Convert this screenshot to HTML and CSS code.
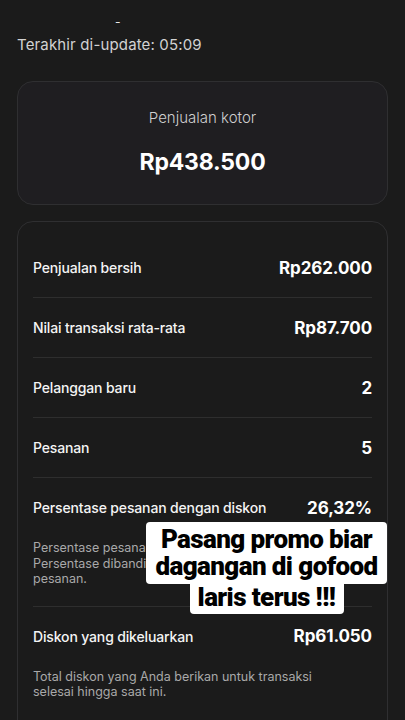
FILE: index.html
```html
<!DOCTYPE html>
<html lang="id">
<head>
<meta charset="utf-8">
<link rel="stylesheet" href="styles.css">
</head>
<body>
<div class="page">
  <div class="dash">-</div>
  <div class="updated">Terakhir di-update: 05:09</div>

  <section class="card gross">
    <div class="gross-label">Penjualan kotor</div>
    <div class="gross-value">Rp438.500</div>
  </section>

  <section class="card stats">
    <div class="row">
      <div class="row-head"><span class="label">Penjualan bersih</span><span class="value">Rp262.000</span></div>
    </div>
    <div class="row">
      <div class="row-head"><span class="label">Nilai transaksi rata-rata</span><span class="value">Rp87.700</span></div>
    </div>
    <div class="row">
      <div class="row-head"><span class="label">Pelanggan baru</span><span class="value">2</span></div>
    </div>
    <div class="row">
      <div class="row-head"><span class="label">Pesanan</span><span class="value">5</span></div>
    </div>
    <div class="row with-desc">
      <div class="row-head"><span class="label">Persentase pesanan dengan diskon</span><span class="value">26,32%</span></div>
      <p class="desc">Persentase pesanan yang memakai diskon.<br>Persentase dibandingkan dengan total<br>pesanan.</p>
    </div>
    <div class="row with-desc">
      <div class="row-head"><span class="label">Diskon yang dikeluarkan</span><span class="value">Rp61.050</span></div>
      <p class="desc">Total diskon yang Anda berikan untuk transaksi<br>selesai hingga saat ini.</p>
    </div>
  </section>

  <div class="caption">
    <span class="cap-box cap-wide">Pasang promo biar<br>dagangan di gofood</span>
    <span class="cap-box cap-narrow">laris terus !!!</span>
  </div>
</div>
</body>
</html>
```
FILE: styles.css
```css
* { box-sizing: border-box; }
html, body {
  margin: 0;
  padding: 0;
  background: #1b1b1b;
}
body {
  font-family: Inter, "Noto Sans", sans-serif;
  color: #f2f2f2;
  width: 405px;
  height: 720px;
  overflow: hidden;
}
.page {
  position: relative;
  padding: 17px 17px 0 17px;
  height: 720px;
  overflow: hidden;
}
.dash {
  color: #e8e8e8;
  font-size: 12px;
  line-height: 10px;
  height: 10px;
  padding-left: 98px;
}
.updated {
  font-size: 15px;
  color: #d2d2d2;
  line-height: 18px;
  margin-top: 9px;
  letter-spacing: 0.15px;
}
.card {
  border: 1px solid #2f2f31;
  border-radius: 16px;
}
.gross {
  margin-top: 27px;
  height: 124px;
  background: #1f1e21;
  display: flex;
  flex-direction: column;
  align-items: center;
  padding-top: 26px;
}
.gross-label {
  font-size: 15px;
  color: #cfcfcf;
  font-weight: 300;
  line-height: 20px;
}
.gross-value {
  font-size: 23px;
  font-weight: 700;
  color: #ffffff;
  margin-top: 20px;
  line-height: 28px;
  letter-spacing: -0.2px;
}
.stats {
  margin-top: 16px;
  padding: 16px 15px 40px 15px;
  background: #1b1b1b;
  height: 600px;
}
.row {
  border-bottom: 1px solid #2e2e2e;
}
.row:last-child { border-bottom: none; }
.row-head {
  height: 59px;
  display: flex;
  align-items: center;
  justify-content: space-between;
}
.label {
  font-size: 14px;
  font-weight: 500;
  color: #f4f4f4;
  letter-spacing: -0.15px;
}
.value {
  font-size: 17px;
  font-weight: 700;
  color: #ffffff;
  letter-spacing: -0.1px;
}
.desc {
  margin: 3px 0 0 0;
  padding: 0 0 19px 0;
  font-size: 12.5px;
  line-height: 15.5px;
  color: #a9a9a9;
}
.caption {
  position: absolute;
  left: 146px;
  top: 522px;
  width: 241px;
  display: flex;
  flex-direction: column;
  align-items: center;
  font-family: Roboto, "Liberation Sans", sans-serif;
  font-weight: 900;
  font-size: 26px;
  line-height: 27px;
  color: #000;
  text-align: center;
}
.cap-box {
  background: #ffffff;
  border-radius: 4px;
  display: block;
}
.cap-wide {
  width: 241px;
  padding: 4px 0 4px 0;
  letter-spacing: -0.6px;
}
.cap-narrow {
  width: 154px;
  padding: 0 0 3px 0;
  border-radius: 0 0 4px 4px;
  letter-spacing: -0.6px;
}
```
